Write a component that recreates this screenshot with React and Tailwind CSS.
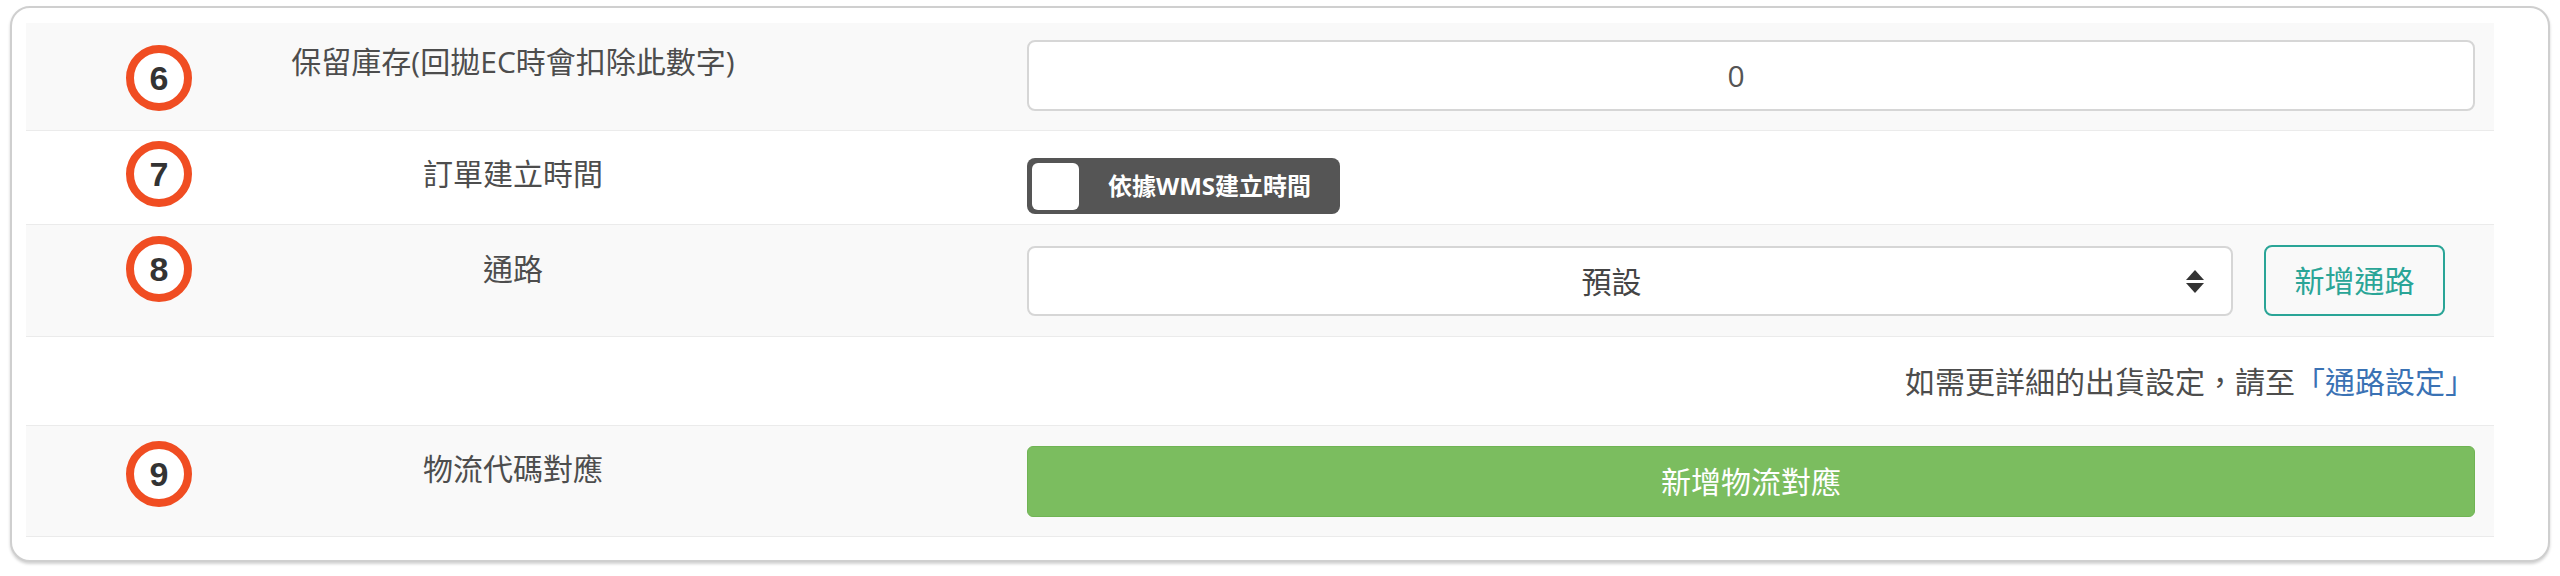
import React from "react";

// numbered red marker that sits over the label column
const Marker = ({ n, top }) => (
  <div
    className={`absolute left-[100px] ${top} w-[66px] h-[66px] rounded-full border-[8px] border-[#f04d22] bg-white flex items-center justify-center font-['Liberation_Sans',sans-serif] font-bold text-[34px] leading-none text-[#333]`}
  >
    {n}
  </div>
);

const Row = ({ striped, marker, markerTop, labelPt, label, contentCls, children }) => (
  <div className={`relative flex items-start border-b border-[#ebebeb] ${striped ? "bg-[#f9f9f9]" : "bg-white"}`}>
    {marker && <Marker n={marker} top={markerTop} />}
    <div className={`w-[974px] shrink-0 text-center text-[30px] leading-[42px] text-[#4d4d4d] ${labelPt}`}>
      {label}
    </div>
    <div className={`flex-1 ml-[27px] pr-[19px] ${contentCls}`}>{children}</div>
  </div>
);

export default function App() {
  return (
    <div className="min-h-screen bg-white pt-[6px] pl-[10px] font-['Open_Sans','Noto_Sans_CJK_TC',sans-serif]">
      <div className="w-[2540px] h-[556px] border-2 border-[#cfcfcf] rounded-[20px] shadow-[0_2px_3px_rgba(0,0,0,0.18)] bg-white pt-[15px] pl-[14px] pr-[54px]">
        {/* 6 - reserved stock */}
        <Row striped marker="6" markerTop="top-[22px]" labelPt="pt-[18px]" label="保留庫存(回拋EC時會扣除此數字)" contentCls="pt-[17px] pb-[19px]">
          <input
            type="text"
            defaultValue="0"
            className="w-full h-[71px] border-2 border-[#d6d6d6] rounded-[8px] bg-white text-center pr-[30px] text-[30px] text-[#555] outline-none"
          />
        </Row>

        {/* 7 - order created time */}
        <Row marker="7" markerTop="top-[10px]" labelPt="pt-[22px]" label="訂單建立時間" contentCls="pt-[27px] pb-[10px]">
          <div className="w-[313px] h-[56px] rounded-[8px] bg-[#555] flex items-center pl-[5px]">
            <div className="w-[47px] h-[47px] rounded-[6px] bg-white" />
            <span className="flex-1 text-center text-white font-bold text-[24px] leading-none">依據WMS建立時間</span>
          </div>
        </Row>

        {/* 8 - channel */}
        <Row striped marker="8" markerTop="top-[11px]" labelPt="pt-[23px]" label="通路" contentCls="pt-[21px] pb-[20px] flex items-start">
          <div className="flex-1 h-[70px] border-2 border-[#d6d6d6] rounded-[8px] bg-white flex items-center pl-[8px]">
            <span className="flex-1 text-center text-[30px] text-[#444]">預設</span>
            <svg width="18" height="23" viewBox="0 0 18 23" className="mr-[27px]">
              <polygon points="9,0 18,10 0,10" fill="#333" />
              <polygon points="0,13 18,13 9,23" fill="#333" />
            </svg>
          </div>
          <button className="ml-[31px] mr-[30px] -mt-px w-[181px] h-[71px] border-2 border-[#2aa597] rounded-[8px] text-[#2aa597] text-[30px]">
            新增通路
          </button>
        </Row>

        {/* hint */}
        <Row label="" labelPt="" contentCls="h-[88px] flex items-center justify-end">
          <span className="text-[30px] text-[#4d4d4d]">
            如需更詳細的出貨設定，請至<a className="text-[#3a72b4]">「通路設定」</a>
          </span>
        </Row>

        {/* 9 - logistics code mapping */}
        <Row striped marker="9" markerTop="top-[15px]" labelPt="pt-[22px]" label="物流代碼對應" contentCls="pt-[20px] pb-[19px]">
          <button className="w-full h-[71px] rounded-[6px] bg-[#7bbd5f] border border-[#70b454] text-white text-[30px]">
            新增物流對應
          </button>
        </Row>
      </div>
    </div>
  );
}
